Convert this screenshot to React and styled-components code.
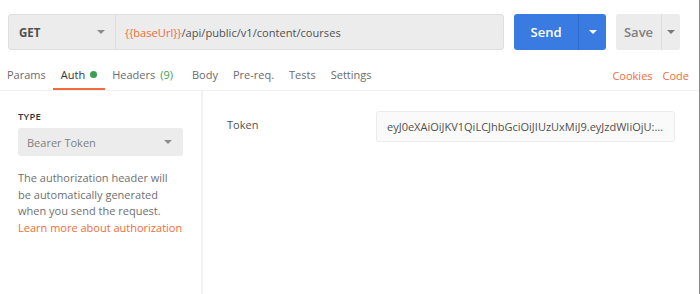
import React from "react";
import styled, { createGlobalStyle } from "styled-components";

const Global = createGlobalStyle`
  html, body { margin: 0; padding: 0; background: #fff; }
  body { font-family: "Open Sans", "Noto Sans", sans-serif; -webkit-font-smoothing: antialiased; }
  * { box-sizing: border-box; }
`;

const ORANGE = "#f26b3a";

const Page = styled.div`
  width: 700px;
  height: 294px;
  overflow: hidden;
  background: #fff;
  border-right: 1px solid #8a8a8a;
  display: flex;
  flex-direction: column;
  color: #505050;
  font-size: 11px;
`;

const TopBar = styled.div`
  display: flex;
  gap: 10px;
  padding: 14px 19px 0 8px;
  height: 50px;
`;

const UrlGroup = styled.div`
  flex: 1;
  display: flex;
  height: 36px;
  background: #ececec;
  border: 1px solid #dedede;
  border-radius: 3px;
`;

const Method = styled.div`
  width: 107px;
  display: flex;
  align-items: center;
  justify-content: space-between;
  padding: 0 10px 0 10px;
  border-right: 1px solid #dedede;
  font-weight: 700;
  font-size: 11.5px;
  color: #505050;
`;

const Caret = styled.span`
  width: 0;
  height: 0;
  border-left: 4px solid transparent;
  border-right: 4px solid transparent;
  border-top: 4px solid ${(p) => p.$color || "#8c8c8c"};
`;

const UrlText = styled.div`
  display: flex;
  align-items: center;
  padding-left: 9px;
  font-size: 11.1px;
  color: #505050;
`;

const Var = styled.span`
  color: ${ORANGE};
`;

const SplitButton = styled.div`
  display: flex;
  height: 36px;
  border-radius: 3px;
  background: ${(p) => (p.$primary ? "#3a7be2" : "#ececec")};
  color: ${(p) => (p.$primary ? "#fff" : "#808080")};
  font-weight: 600;
  font-size: 13px;
`;

const ButtonMain = styled.div`
  width: ${(p) => p.$w}px;
  display: flex;
  align-items: center;
  justify-content: center;
`;

const ButtonArrow = styled.div`
  width: ${(p) => p.$w}px;
  display: flex;
  align-items: center;
  justify-content: center;
  border-left: 1px solid ${(p) => (p.$primary ? "#2f6cd0" : "#dcdcdc")};
`;

const TabsRow = styled.div`
  display: flex;
  align-items: stretch;
  height: 41px;
  padding: 10px 10px 0 7px;
  border-bottom: 1px solid #f0f0f0;
`;

const Tab = styled.div`
  display: flex;
  align-items: center;
  gap: 5px;
  padding: 0 7.5px;
  margin-left: ${(p) => (p.$first ? "-7.5px" : "0")};
  color: ${(p) => (p.$active ? "#333" : "#6b6b6b")};
  font-size: 11px;
  border-bottom: 2px solid ${(p) => (p.$active ? ORANGE : "transparent")};
  margin-right: ${(p) => p.$mr || 0}px;
`;

const Count = styled.span`
  color: #3e9f4e;
`;

const Dot = styled.span`
  width: 7px;
  height: 7px;
  border-radius: 50%;
  background: #3e9f4e;
`;

const Spacer = styled.div`
  flex: 1;
`;

const Link = styled.a`
  color: ${ORANGE};
  text-decoration: none;
  display: flex;
  align-items: center;
  font-size: 11px;
  margin-left: ${(p) => p.$ml || 0}px;
`;

const Body = styled.div`
  flex: 1;
  display: grid;
  grid-template-columns: 203px 1fr;
`;

const LeftPanel = styled.div`
  padding: 19px 18px 0 18px;
  border-right: 2px solid #f2f2f2;
`;

const Label = styled.div`
  font-size: 9.5px;
  font-weight: 600;
  color: #333;
  letter-spacing: 0.2px;
  margin-bottom: 5px;
`;

const Select = styled.div`
  height: 28px;
  background: #ececec;
  border-radius: 3px;
  display: flex;
  align-items: center;
  justify-content: space-between;
  padding: 0 11px 0 9px;
  color: #808080;
  font-size: 11px;
`;

const Help = styled.p`
  margin: 14px 0 0;
  font-size: 11px;
  line-height: 16.7px;
  color: #707070;
  white-space: nowrap;
`;

const HelpLink = styled.span`
  color: ${ORANGE};
`;

const RightPanel = styled.div`
  display: flex;
  align-items: flex-start;
  padding: 20px 24px 0 24px;
`;

const FieldLabel = styled.div`
  width: 149px;
  padding-top: 6px;
  font-size: 11px;
  color: #505050;
`;

const TokenInput = styled.div`
  width: 299px;
  height: 31px;
  background: #fafafa;
  border: 1px solid #ececec;
  border-radius: 3px;
  display: flex;
  align-items: center;
  padding: 0 10px;
  font-size: 11px;
  color: #505050;
  white-space: nowrap;
`;

export default function App() {
  return (
    <>
      <Global />
      <Page>
        <TopBar>
          <UrlGroup>
            <Method>
              GET <Caret />
            </Method>
            <UrlText>
              <Var>{"{{baseUrl}}"}</Var>/api/public/v1/content/courses
            </UrlText>
          </UrlGroup>
          <SplitButton $primary>
            <ButtonMain $w={64}>Send</ButtonMain>
            <ButtonArrow $w={28} $primary>
              <Caret $color="#fff" />
            </ButtonArrow>
          </SplitButton>
          <SplitButton>
            <ButtonMain $w={45}>Save</ButtonMain>
            <ButtonArrow $w={19}>
              <Caret $color="#7a7a7a" />
            </ButtonArrow>
          </SplitButton>
        </TopBar>
        <TabsRow>
          <Tab $first>Params</Tab>
          <Tab $active>
            Auth <Dot />
          </Tab>
          <Tab $mr={4}>
            Headers <Count>(9)</Count>
          </Tab>
          <Tab>Body</Tab>
          <Tab>Pre-req.</Tab>
          <Tab>Tests</Tab>
          <Tab>Settings</Tab>
          <Spacer />
          <Link>Cookies</Link>
          <Link $ml={10}>Code</Link>
        </TabsRow>
        <Body>
          <LeftPanel>
            <Label>TYPE</Label>
            <Select>
              Bearer Token <Caret />
            </Select>
            <Help>
              The authorization header will
              <br />
              be automatically generated
              <br />
              when you send the request.
              <br />
              <HelpLink>Learn more about authorization</HelpLink>
            </Help>
          </LeftPanel>
          <RightPanel>
            <FieldLabel>Token</FieldLabel>
            <TokenInput>
              eyJ0eXAiOiJKV1QiLCJhbGciOiJIUzUxMiJ9.eyJzdWIiOjU:…
            </TokenInput>
          </RightPanel>
        </Body>
      </Page>
    </>
  );
}
